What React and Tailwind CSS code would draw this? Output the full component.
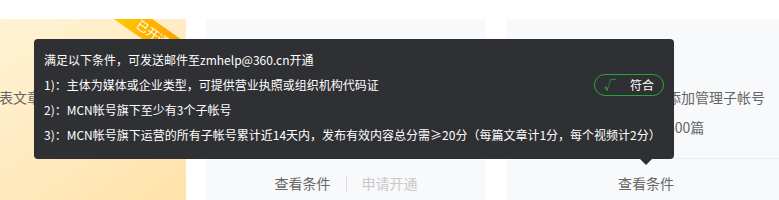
import React from 'react';

const font = "font-['Microsoft_YaHei','Noto_Sans_CJK_SC',sans-serif]";

const Tooltip = () => (
    <div className="absolute left-[34px] top-[39px] w-[640px] rounded-[4px] bg-[#2f3033] pl-[10px] pr-[10px] pt-[8px] pb-[12px] text-[12px] leading-[25px] text-white">
        <div>满足以下条件，可发送邮件至zmhelp@360.cn开通</div>
        <div className="flex items-center justify-between">
            <span>1)：主体为媒体或企业类型，可提供营业执照或组织机构代码证</span>
            <span className="flex h-[22px] w-[70px] items-center rounded-full border border-[#2aa43a] pl-[9px] leading-none">
                <span className="text-[#2ec43f]">√</span>
                <span className="ml-[14px]">符合</span>
            </span>
        </div>
        <div>2)：MCN帐号旗下至少有3个子帐号</div>
        <div>3)：MCN帐号旗下运营的所有子帐号累计近14天内，发布有效内容总分需≥20分（每篇文章计1分，每个视频计2分）</div>
        {/* arrow */}
        <div className="absolute bottom-[-6px] left-[606px] h-0 w-0 border-x-[6px] border-t-[6px] border-x-transparent border-t-[#2f3033]" />
    </div>
);

export default function App() {
    return (
        <div className={`relative h-[200px] w-[779px] overflow-hidden bg-white ${font}`}>
            <div className="ml-[-94px] flex gap-5 pt-[19px]">
                {/* opened card */}
                <div className="relative h-[188px] w-[280px] shrink-0 overflow-hidden bg-linear-to-br from-[#fff6de] to-[#ffe2a9]">
                    <div className="absolute left-[187px] top-[3px] flex h-[22px] w-[120px] rotate-[35deg] items-center justify-center bg-linear-to-r from-[#ffd500] to-[#ff8a00] text-[12px] text-white">
                        已开通
                    </div>
                    <div className="pl-[65px] pt-[63px] text-[14px] leading-[30px] text-[#666]">
                        <div>可发表文章</div>
                    </div>
                </div>

                {/* apply card */}
                <div className="flex h-[188px] w-[280px] shrink-0 flex-col bg-[#f8f9fb]">
                    <div className="h-[140px] border-b border-[#ebedf0]" />
                    <div className="flex h-[48px] items-center justify-center text-[14px]">
                        <span className="text-[#666]">查看条件</span>
                        <span className="mx-[15px] h-4 w-px bg-[#dcdcdc]" />
                        <span className="text-[#c8c8c8]">申请开通</span>
                    </div>
                </div>

                {/* mcn card */}
                <div className="flex h-[188px] w-[280px] shrink-0 flex-col bg-[#f8f9fb]">
                    <div className="h-[140px] border-b border-[#ebedf0] pl-[161px] pt-[63px] text-[14px] leading-[30px] text-[#666]">
                        <div>添加管理子帐号</div>
                        <div>500篇</div>
                    </div>
                    <div className="flex h-[48px] items-center justify-center text-[14px] text-[#666]">
                        查看条件
                    </div>
                </div>
            </div>

            <Tooltip />
        </div>
    );
}
